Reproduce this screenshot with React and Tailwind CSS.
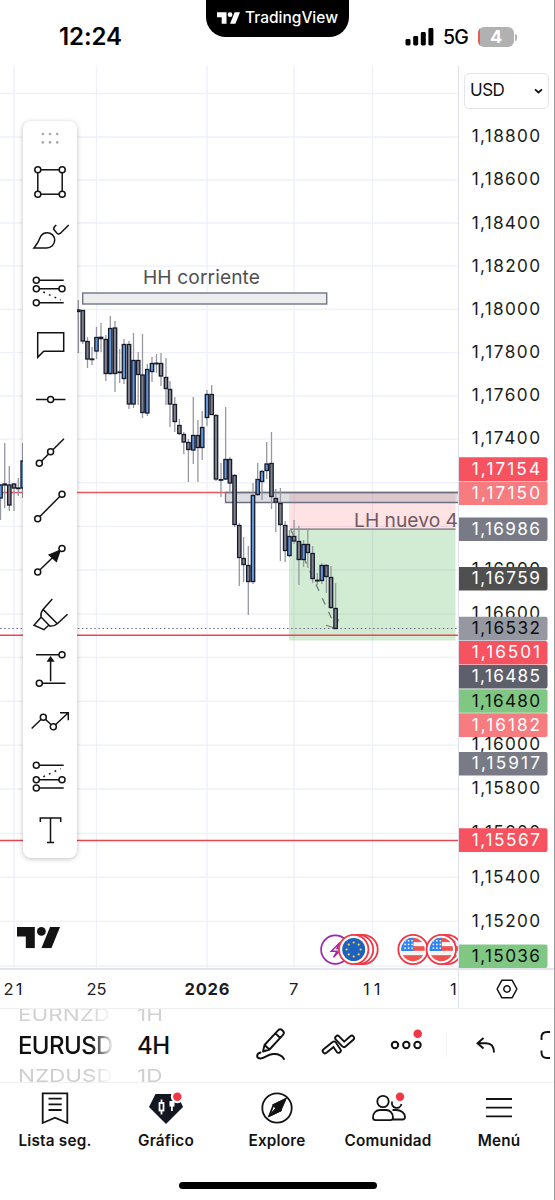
import React from 'react';

const SANS = "font-['Inter','Liberation_Sans',sans-serif]";

/* x, high, low, body top, body bottom, direction */
const candles = [
  [0.5, 484, 520, 485, 498, 'u'], [4.7, 443, 508, 484, 485, 'd'], [9.3, 466, 511, 485, 505, 'd'],
  [14, 483, 511, 484, 488, 'd'], [18.3, 478, 496, 488, 488.6, 'd'], [22.7, 443, 498, 461, 488, 'u'],
  [78.3, 300, 353, 310, 311.5, 'd'], [82.8, 310, 344, 310.5, 341, 'd'], [87.5, 337, 368, 341.5, 359, 'd'],
  [92, 347, 365, 359, 359.6, 'd'], [96.5, 327, 359, 337.5, 351, 'u'], [101, 323, 352, 337.3, 338.6, 'd'],
  [105.8, 335, 381, 339.5, 373.5, 'd'], [110.3, 316, 375, 328.5, 373.5, 'u'], [115, 321, 392, 328, 373.5, 'd'],
  [119.7, 349, 383, 372, 372.6, 'd'], [124, 339, 384, 344.5, 378.5, 'u'], [129, 341, 409, 344.5, 404, 'd'],
  [133.5, 333, 408, 360.5, 404, 'u'], [138.2, 352, 405, 360.5, 374.5, 'd'], [142.5, 334, 418, 375, 412.5, 'd'],
  [147.3, 364, 416, 369.5, 413, 'u'], [152, 357, 382, 363.5, 371.5, 'u'], [156.5, 354, 373, 363.2, 363.8, 'd'],
  [161, 353, 386, 363.5, 376, 'd'], [166, 358, 405, 377.5, 388.5, 'd'], [170, 381, 427, 389.5, 404, 'd'],
  [174.8, 397, 432, 404.5, 421.5, 'd'], [179.4, 419, 435, 425.5, 433.5, 'd'], [183.8, 432, 454, 434.5, 442, 'd'],
  [188.4, 439, 482, 442.5, 449.5, 'd'], [193.3, 397, 464, 435.5, 450, 'u'], [197.9, 420, 482, 435.5, 447.5, 'd'],
  [202.2, 411, 460, 427.5, 447.5, 'u'], [207, 390, 426, 394.5, 417.5, 'u'], [211.7, 385, 415, 394.5, 414.5, 'd'],
  [216, 414, 481, 415.5, 479, 'd'], [221, 463, 497, 479.6, 480.2, 'd'], [225.6, 407, 480, 459.5, 479, 'u'],
  [229.9, 457, 493, 459.5, 483, 'd'], [234.6, 474, 527, 475.5, 524.5, 'd'], [239.3, 523, 586, 525.5, 557.5, 'd'],
  [243.6, 537, 582, 558.5, 564.5, 'd'], [248.3, 546, 615, 565.5, 581.5, 'd'], [253, 483, 584, 495.5, 581.5, 'u'],
  [257.7, 463, 496, 479.5, 494.5, 'u'], [262, 470, 500, 471.5, 481.5, 'u'], [266.7, 442, 479, 464, 470.5, 'u'],
  [271.5, 432, 509, 463.5, 496.5, 'd'], [275.8, 489, 532, 498.5, 502, 'd'], [280.4, 488, 561, 503.5, 524.5, 'd'],
  [285.2, 521, 562, 525.5, 550.5, 'd'], [289.4, 530, 557, 536.5, 555.5, 'u'], [294.1, 520, 544, 536.5, 541, 'd'],
  [298.9, 526, 585, 541.5, 559.5, 'd'], [303.6, 540, 567, 544.5, 559.5, 'u'], [307.8, 529, 568, 544.5, 552.5, 'd'],
  [312.6, 546, 583, 553.5, 578.5, 'd'], [317.3, 573, 585, 580.3, 580.9, 'd'], [321.8, 563, 584, 565.5, 580.5, 'u'],
  [326.4, 564, 593, 565.5, 576.5, 'd'], [331, 566, 609, 577.5, 607.5, 'd'], [335.6, 583, 629, 608.5, 628.5, 'd'],
];

const gridY = [93.7, 137, 180, 223, 266.2, 309.5, 352.7, 396, 439.2, 482.6, 526.3, 570, 613.8, 657.5, 701.3, 745.1, 789, 833.3, 877.3, 921.4, 966];
const gridX = [14, 96.5, 207, 294, 372.5];

const priceLabels = [
  [136, '1,18800'], [179.3, '1,18600'], [222.5, '1,18400'], [265.7, '1,18200'], [308.8, '1,18000'],
  [352, '1,17800'], [395, '1,17600'], [438.3, '1,17400'], [569, '1,16800'], [612.8, '1,16600'],
  [744.3, '1,16000'], [788, '1,15800'], [832, '1,15600'], [876.5, '1,15400'], [920.7, '1,15200'],
];

const priceTags = [
  [457.3, '1,17154', '#f7525f', '#fff'], [481.5, '1,17150', '#f77c80', '#fff'], [517.5, '1,16986', '#787b86', '#fff'],
  [567, '1,16759', '#4f4f4f', '#fff'], [616.8, '1,16532', '#9598a1', '#101010'], [641, '1,16501', '#f7525f', '#fff'],
  [665, '1,16485', '#5d606b', '#fff'], [689.2, '1,16480', '#81c784', '#101010'], [713.3, '1,16182', '#f77c80', '#fff'],
  [752, '1,15917', '#787b86', '#fff'], [828.3, '1,15567', '#f7525f', '#fff'], [944.4, '1,15036', '#81c784', '#101010'],
];

function Logo({ className, fill }) {
  return (
    <svg className={className} viewBox="0 0 43 21.3" fill={fill}>
      <path d="M0 0h17.8v21.3H8.8V9.4H0z" />
      <circle cx="24.4" cy="4.4" r="4.4" />
      <path d="M33 0h10l-8.6 21.3h-10z" />
    </svg>
  );
}

function StatusBar() {
  return (
    <header className="flex h-[66px] shrink-0 items-start">
      <div className="flex w-[206px] pl-[59px] pt-[23px]">
        <span className="text-[24px] font-semibold leading-7 tracking-[-0.1px] text-black">12:24</span>
      </div>
      <div className="flex h-[37px] w-[143px] items-center justify-center gap-[5px] rounded-b-[20px] bg-black pb-[2px]">
        <Logo className="h-[12px] w-[23px]" fill="#fff" />
        <span className="text-[15.5px] font-medium tracking-[0px] text-white">TradingView</span>
      </div>
      <div className="flex items-center pl-[56px] pt-[27px]">
        <svg className="h-[20px] w-[29px]" viewBox="0 0 29 20">
          <rect x="0.5" y="12" width="5" height="6.4" rx="1.4" />
          <rect x="8.2" y="9" width="5" height="9.4" rx="1.4" />
          <rect x="15.8" y="5" width="5" height="13.4" rx="1.4" />
          <rect x="23.4" y="1" width="5" height="17.4" rx="1.4" />
        </svg>
        <span className="ml-[9px] w-[26px] text-[19.5px] font-medium leading-5 tracking-[-0.8px]">5G</span>
        <div className="ml-[9px] flex h-[20px] w-[36px] items-stretch overflow-hidden rounded-[6px] bg-[#b1b1b1]">
          <div className="w-[2px] bg-[#ee5a50]" />
          <span className="flex-1 pr-[2px] text-center text-[18px] font-bold leading-5 text-white">4</span>
        </div>
        <div className="ml-[1px] h-[7px] w-[2px] rounded-r-full bg-[#b5b5b5]" />
      </div>
    </header>
  );
}

function UsFlag({ cx, id }) {
  return (
    <g>
      <circle cx={cx} cy="949.5" r="14.7" fill="#fff" stroke="#f23645" strokeWidth="1.8" />
      <clipPath id={id}><circle cx={cx} cy="949.5" r="11.7" /></clipPath>
      <g clipPath={`url(#${id})`}>
        <rect x={cx - 12} y="937" width="24" height="25" fill="#f5f5f5" />
        {[937.5, 946.2, 955.2].map((y, i) => (
          <rect key={y} x={cx - 12} y={y} width="24" height={i === 2 ? 7 : 4.6} fill="#ef5350" />
        ))}
        <rect x={cx - 12} y="937" width="12.5" height="14" fill="#2f86f0" />
        {[0, 1, 2].map((r) => [0, 1, 2].map((c) => (
          <rect key={`${r}${c}`} x={cx - 8.7 + c * 3.5} y={940 + r * 3.7} width="1.5" height="1.5" fill="#fff" />
        )))}
      </g>
    </g>
  );
}

function ChartPane() {
  return (
    <svg className="block h-[902px] w-[458px]" viewBox="0 66 458 902">
      <g stroke="#eef0fa" strokeWidth="1.3">
        {gridY.map((y) => <path key={y} d={`M0 ${y}H458`} />)}
        {gridX.map((x) => <path key={x} d={`M${x} 66V968`} />)}
      </g>

      <path d="M0 492.5H458" stroke="#f0555d" strokeWidth="1.3" />
      <rect x="289" y="492.5" width="166.5" height="37" fill="#f7525f" fillOpacity="0.17" />
      <rect x="289" y="529.5" width="166.5" height="111" fill="#4caf50" fillOpacity="0.25" />
      <path d="M225.5 492.5H460V502.5H225.5Z" fill="#787b86" fillOpacity="0.25" stroke="#6d7080" strokeWidth="1.3" />
      <path d="M290 529.2H455.5" stroke="#73707c" strokeWidth="1.3" />
      <path d="M0 628.5H458" stroke="#6a6985" strokeWidth="1.2" strokeDasharray="1.5 2.6" />
      <path d="M0 635.2H458" stroke="#f0454f" strokeWidth="1.5" />
      <path d="M0 840.4H458" stroke="#e64552" strokeWidth="1.5" />
      <rect x="82.7" y="293" width="244" height="11" fill="#ededed" stroke="#70748a" strokeWidth="1.4" />

      <text x="143" y="284.3" fontSize="19.2" fill="#505050" textLength="117">HH corriente</text>
      <text x="354" y="526.5" fontSize="19.2" fill="#70595f" textLength="104">LH nuevo 4</text>

      <path d="M291 530L336 628" stroke="#6f7f78" strokeWidth="1.3" strokeDasharray="7 8" fill="none" />
      <path d="M326 625.3L336 628.5L338.5 619" stroke="#6f7f78" strokeWidth="1.2" fill="none" />

      {candles.map(([x, hi, lo, top, bottom, dir]) => (
        <g key={x}>
          <path d={`M${x} ${hi}V${lo}`} stroke="#96979f" strokeWidth="1.3" />
          <rect x={x - 1.7} y={top} width="3.4" height={bottom - top} fill={dir === 'u' ? '#6296d6' : '#7f818b'} stroke="#171a2b" strokeWidth="1.3" />
        </g>
      ))}

      <svg x="17" y="927" width="43" height="21.3" viewBox="0 0 43 21.3" fill="#131313">
        <path d="M0 0h17.8v21.3H8.8V9.4H0z" />
        <circle cx="24.4" cy="4.4" r="4.4" />
        <path d="M33 0h10l-8.6 21.3h-10z" />
      </svg>

      <circle cx="335.3" cy="949.6" r="14.2" fill="#fff" stroke="#9c27b0" strokeWidth="1.7" />
      <path d="M340 942.5L331.3 951.3H337L333.5 957.3L342 948.5H337Z" fill="none" stroke="#9c27b0" strokeWidth="1.5" />
      {[363, 358.5, 353.7].map((x) => <circle key={x} cx={x} cy="949.5" r="14.7" fill="#fff" stroke="#f23645" strokeWidth="1.8" />)}
      <circle cx="353.7" cy="949.5" r="11.5" fill="#1f62bd" />
      {[0, 1, 2, 3, 4, 5, 6, 7].map((i) => (
        <circle key={i} cx={353.7 + 7 * Math.cos((i * Math.PI) / 4)} cy={949.5 + 7 * Math.sin((i * Math.PI) / 4)} r="1.1" fill="#f2d64b" />
      ))}
      <UsFlag cx={413} id="flag-a" />
      <UsFlag cx={447} id="flag-b" />
      <UsFlag cx={441.3} id="flag-c" />
    </svg>
  );
}

function PriceScale() {
  return (
    <div className="relative h-[902px] w-[95px]">
      <svg className="block h-[902px] w-[95px]" viewBox="459 66 95 902" fontSize="17.2">
        {priceLabels.map(([y, t]) => <text key={t} x="471.8" y={y + 6} fill="#1b1c22" textLength="68.2">{t}</text>)}
        {priceTags.map(([y, t, bg, fg]) => (
          <g key={t}>
            <path d={`M459 ${y}h86.500q2 0 2 2v19.600q0 2-2 2H459z`} fill={bg} />
            <text x="471.8" y={y + 17.3} fill={fg} textLength="68.2">{t}</text>
          </g>
        ))}
      </svg>
      <button className="absolute left-[5px] top-[7px] flex h-[36px] w-[85px] items-center justify-between rounded-[5px] border border-[#e4e5ec] bg-white pl-[5px] pr-[5px]">
        <span className="text-[17px] tracking-[-0.5px] text-[#131313]">USD</span>
        <svg className="h-[8px] w-[9px]" viewBox="0 0 9 8" fill="none" stroke="#111" strokeWidth="1.8"><path d="M1 2.300L4.500 5.500L8 2.300" /></svg>
      </button>
    </div>
  );
}

const Dot = ({ x, y }) => <circle cx={x} cy={y} r="3" fill="#fff" />;

const tools = [
  ['Rectángulo', <><rect x="-12.2" y="-12.2" width="24.4" height="24.4" /><Dot x={-12.2} y={-12.2} /><Dot x={12.2} y={-12.2} /><Dot x={-12.2} y={12.2} /><Dot x={12.2} y={12.2} /></>],
  ['Pincel', <path d="M-16 12C-12.5 8-11 5-9-.2C-7.500-2.500-5.500-3.300-3-3.300C1.500-3.300 4.700 0 4.700 4C4.700 8.700 1 12-3.300 12ZM6.300-11L4.700-9.500Q3-7.500 4.200-6L7-2.700Q8.500-1.300 10.500-2.800L18.700-11" />],
  ['Retroceso de Fibonacci', <><path d="M-13.700-10.700H13.700M-13.700-2.300H12M-13.700 11.700H13.700" /><path d="M-6.700 1L10.700 9" strokeDasharray="1.800 4.400" /><Dot x={-13.7} y={-10.7} /><Dot x={-13.7} y={-2.3} /><Dot x={12} y={-2.3} /><Dot x={-13.7} y={11.7} /></>],
  ['Comentario', <path d="M-12.300-12.300H13.700V6.200H-6.300L-12.300 12.300Z" />],
  ['Línea horizontal', <><path d="M-14 .5H15.500" /><Dot x={0.6} y={0.5} /></>],
  ['Rayo', <><path d="M-10.700 10.300L14-14.300" /><Dot x={-10.7} y={10.3} /><Dot x={0.6} y={-1.3} /></>],
  ['Línea de tendencia', <><path d="M-12.300 11.700L12-12.700" /><Dot x={-12.3} y={11.7} /><Dot x={12} y={-12.7} /></>],
  ['Flecha', <><path d="M-12.300 11L12-12.500" /><path d="M10-10.500L-.7-6L6.300.300Z" fill="#131313" /><Dot x={-12.3} y={11} /><Dot x={12} y={-12.5} /></>],
  ['Resaltador', <path d="M2.300-16L-7-5.600C-9-3-9.500-1-9 2L0 11.300C3 11.300 5 10.800 7.300 8.700L17.500-.8M-7-5.600L7.300 8.700M-9 2.300L-16 10.300L-6 14.700L-1.300 10.300" />],
  ['Rango de precio', <><path d="M-14-14.300H12M-10.700 14.300H15.500M.6 12.300V-9" /><path d="M.6-11.700L-2-8H3.200Z" fill="#131313" /><Dot x={12} y={-14.3} /><Dot x={-10.7} y={14.3} /></>],
  ['Ondas', <><path d="M-18.300 5.500L-6.700-5.800L3.300 3.800L18.300-10.200M10-10.200H18.300V-2.800" /><Dot x={-6.7} y={-5.8} /><Dot x={3.3} y={3.8} /></>],
  ['Extensión de Fibonacci', <><path d="M-13.700-11.700H13.700M-13.700 2.700H12M-13.700 11H13.700" /><path d="M-6.700-.3L10.700-8.300" strokeDasharray="1.800 4.400" /><Dot x={-13.7} y={-11.7} /><Dot x={-13.7} y={2.7} /><Dot x={12} y={2.7} /><Dot x={-13.7} y={11} /></>],
  ['Texto', <path d="M-9.700-9V-13H10.700V-9M.5-13V11.500M-3 11.500H4" />],
];

function DrawingToolbar() {
  return (
    <div className="absolute left-[23px] top-[55px] flex h-[737px] w-[54px] flex-col items-center rounded-lg bg-white shadow-[0_1px_5px_rgba(0,0,0,0.25)]">
      <svg className="mt-[10px] h-[14px] w-[20px] shrink-0" viewBox="-10 -7 20 14" fill="#a9aab0">
        {[-7.2, 0, 7.2].map((x) => [-4, 4.4].map((y) => <circle key={`${x}${y}`} cx={x} cy={y} r="1.35" />))}
      </svg>
      <div className="mt-[10.3px] flex flex-col">
        {tools.map(([name, art]) => (
          <button key={name} aria-label={name} className="flex h-[54.1px] w-[54px] items-center justify-center">
            <svg className="h-[44px] w-[44px]" viewBox="-22 -22 44 44" fill="none" stroke="#131313" strokeWidth="1.5">{art}</svg>
          </button>
        ))}
      </div>
    </div>
  );
}

function TimeAxis() {
  return (
    <div className="flex h-[41px] shrink-0 border-b border-t-2 border-b-[#eeeff3] border-t-[#e3e4ec]">
      <svg className="h-[38px] w-[458px]" viewBox="0 970 458 38" fontSize="16.5" fill="#1b1c22">
        <text x="3.500" y="995" textLength="19">21</text>
        <text x="86.500" y="995" textLength="20">25</text>
        <text x="184.500" y="995" fontWeight="700" textLength="45">2026</text>
        <text x="289" y="995">7</text>
        <text x="363" y="995" textLength="17.500">11</text>
        <text x="450" y="995">1</text>
      </svg>
      <div className="flex flex-1 items-center justify-center border-l border-[#dfe0ec]">
        <svg className="h-[22px] w-[24px]" viewBox="-12 -11 24 22" fill="none" stroke="#131313" strokeWidth="1.5" strokeLinejoin="round">
          <path d="M-9.900 0L-5.200-8.700H5.200L9.900 0L5.200 8.700H-5.200Z" /><circle r="3.200" />
        </svg>
      </div>
    </div>
  );
}

function Wheel({ above, current, below, className }) {
  return (
    <div className={`flex h-[73px] flex-col items-start overflow-hidden whitespace-nowrap ${className}`}>
      <span className="h-[17px] origin-top scale-y-[0.76] text-[22.5px] leading-[15px] text-[#d2d2d2]">{above}</span>
      <span className="h-[39px] text-[24px] font-medium leading-[39px] tracking-[-0.6px] text-[#101010]">{current}</span>
      <span className="h-[17px] origin-top scale-y-[0.76] text-[22.5px] leading-[29px] text-[#cfcfcf]">{below}</span>
    </div>
  );
}

function SymbolBar() {
  return (
    <div className="flex h-[73px] shrink-0 items-center overflow-hidden">
      <Wheel above="EURNZD" current="EURUSD" below="NZDUSD" className="ml-[18px] w-[94px] [mask-image:linear-gradient(to_right,#000_78%,transparent_102%)]" />
      <Wheel above="1H" current="4H" below="1D" className="ml-[25px] w-[60px]" />
      <div className="flex items-center pb-[1.4px]">
        <svg className="ml-[55px] h-[42px] w-[40px]" viewBox="252 1024 40 42" fill="none" stroke="#111" strokeWidth="1.900" strokeLinejoin="round" strokeLinecap="round">
          <path d="M263 1051.500L264.500 1045L278.300 1030.200Q280 1028.400 282 1030L283 1031Q284.800 1032.800 283 1034.800L269.500 1049.500Z M264.500 1045L269.500 1049.500M275.500 1033.400L280 1037.800" />
          <path d="M260.500 1052.500C256 1054 256 1058.500 260.500 1058.500C264.500 1058.500 267 1054.500 273 1054C278.500 1053.600 282 1055.500 284 1059" />
        </svg>
        <svg className="ml-[26px] h-[42px] w-[40px]" viewBox="318 1024 40 42" fill="none" strokeLinejoin="round" strokeLinecap="round">
          <path d="M325 1051L334 1043.800L338.500 1050.500" stroke="#111" strokeWidth="6.400" />
          <path d="M325 1051L334 1043.800L338.500 1050.500" stroke="#fff" strokeWidth="2.700" />
          <path d="M337.500 1038L344 1044.800L351.800 1038" stroke="#111" strokeWidth="6.400" />
          <path d="M337.500 1038L344 1044.800L351.800 1038" stroke="#fff" strokeWidth="2.700" />
        </svg>
        <svg className="ml-[28px] h-[42px] w-[40px]" viewBox="386 1024 40 42" fill="none" stroke="#111" strokeWidth="2">
          <circle cx="395" cy="1045" r="3.200" /><circle cx="406.300" cy="1045" r="3.200" /><circle cx="417.500" cy="1045" r="3.200" />
          <circle cx="417.700" cy="1033.700" r="4.300" fill="#f23645" stroke="none" />
        </svg>
        <div className="ml-[20px] h-[25px] w-px bg-[#f2f2f2]" />
        <svg className="ml-[23px] h-[42px] w-[32px]" viewBox="470 1024 32 42" fill="none" stroke="#111" strokeWidth="1.900">
          <path d="M483.500 1038L477.500 1043.200L483.500 1048.500M477.500 1043.200H486Q494 1043.200 494 1052.500" />
        </svg>
        <svg className="ml-[34px] h-[42px] w-[14px]" viewBox="536 1024 14 42" fill="none" stroke="#111" strokeWidth="1.900">
          <path d="M550 1032H547Q541.500 1032 541.500 1037.500V1040M541.500 1050.500V1052.500Q541.500 1058 547 1058H550" />
        </svg>
      </div>
    </div>
  );
}

const RedDot = ({ x, y }) => <circle cx={x} cy={y} r="4.2" fill="#f23645" stroke="none" />;

const tabs = [
  ['Lista seg.', <><path d="M-12.300-14.700H12.300V15L0 9.700L-12.300 15Z" /><path d="M-6.500-9.300H6.700M-6.500-3.700H6.700M-6.500 2H6.700" /></>],
  ['Gráfico', <>
    <path d="M-10.500-14H11L17-1L0 16L-17-1Z" fill="#131722" stroke="none" />
    <path d="M-4.500-8.500V-5M-4.500 3V6.500" stroke="#fff" /><rect x="-6.500" y="-5" width="4" height="7.500" stroke="#fff" />
    <path d="M3.500-7V-1.500H5V3H6.800V-1.500H8.500V-7Z" fill="#fff" stroke="none" />
    <circle cx="11.300" cy="-11.300" r="6.500" fill="#fff" stroke="none" /><RedDot x={11.3} y={-11.3} /></>],
  ['Explore', <><circle r="14.700" /><path d="M8.300-8.800L-3.500-3L-7.800 8L3.300 2.600Z" /><path d="M8.300-8.800L-3.500-3L-.8.300L3.300 2.600Z" fill="#111" /><path d="M-.8.300L3.300 2.600L-7.800 8Z" fill="#111" /></>],
  ['Comunidad', <>
    <circle cx="-5" cy="-6.500" r="5.700" />
    <path d="M-15 9.500C-15 4.500-11.500 2-8 2H-2C2 2 5 5 5 9.500Q5 12.200 2.500 12.200H-12.500Q-15 12.200-15 9.500ZM4.500 2H8C13 2 17 5 17 9Q17 11.500 14.500 11.500H4.500M4-6.500C3 1 12 2 13.500-4" />
    <RedDot x={12} y={-11.3} /></>],
  ['Menú', <path d="M-13-9H13M-13-.3H13M-13 8.300H13" />],
];

function TabBar() {
  return (
    <nav className="flex h-[118px] shrink-0 flex-col items-center border-t border-[#f1f1f3]">
      <div className="grid w-[555px] grid-cols-5 pt-[7px]">
        {tabs.map(([label, art]) => (
          <button key={label} className="flex flex-col items-center">
            <svg className="h-[36px] w-[40px]" viewBox="-20 -18 40 36" fill="none" stroke="#131313" strokeWidth="1.800">{art}</svg>
            <span className="mt-[5px] whitespace-nowrap text-[15.3px] font-semibold leading-[20px] tracking-[0.2px] text-[#131313]">{label}</span>
          </button>
        ))}
      </div>
      <div className="ml-[2px] mt-[31px] h-[7px] w-[198px] rounded-full bg-black" />
    </nav>
  );
}

export default function App() {
  return (
    <div className={`flex h-[1200px] w-[555px] flex-col overflow-hidden border-r border-[#9a9a9a] bg-white ${SANS}`}>
      <StatusBar />
      <main className="relative flex h-[902px] shrink-0">
        <ChartPane />
        <div className="w-px bg-[#dfe0ec]" />
        <PriceScale />
        <DrawingToolbar />
      </main>
      <TimeAxis />
      <SymbolBar />
      <TabBar />
    </div>
  );
}
